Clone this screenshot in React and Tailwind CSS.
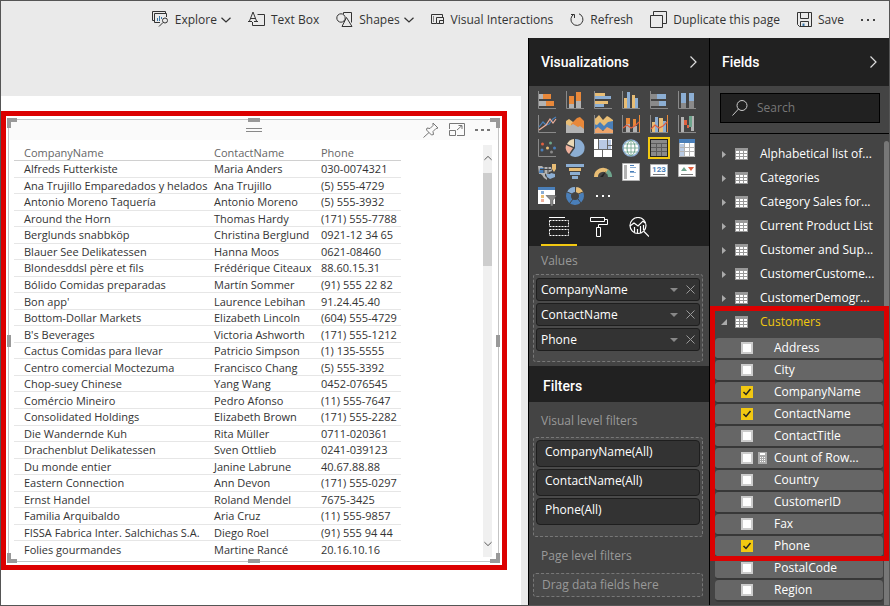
import React from "react";

const customers = [
  ["Alfreds Futterkiste", "Maria Anders", "030-0074321"],
  ["Ana Trujillo Emparedados y helados", "Ana Trujillo", "(5) 555-4729"],
  ["Antonio Moreno Taquería", "Antonio Moreno", "(5) 555-3932"],
  ["Around the Horn", "Thomas Hardy", "(171) 555-7788"],
  ["Berglunds snabbköp", "Christina Berglund", "0921-12 34 65"],
  ["Blauer See Delikatessen", "Hanna Moos", "0621-08460"],
  ["Blondesddsl père et fils", "Frédérique Citeaux", "88.60.15.31"],
  ["Bólido Comidas preparadas", "Martín Sommer", "(91) 555 22 82"],
  ["Bon app'", "Laurence Lebihan", "91.24.45.40"],
  ["Bottom-Dollar Markets", "Elizabeth Lincoln", "(604) 555-4729"],
  ["B's Beverages", "Victoria Ashworth", "(171) 555-1212"],
  ["Cactus Comidas para llevar", "Patricio Simpson", "(1) 135-5555"],
  ["Centro comercial Moctezuma", "Francisco Chang", "(5) 555-3392"],
  ["Chop-suey Chinese", "Yang Wang", "0452-076545"],
  ["Comércio Mineiro", "Pedro Afonso", "(11) 555-7647"],
  ["Consolidated Holdings", "Elizabeth Brown", "(171) 555-2282"],
  ["Die Wandernde Kuh", "Rita Müller", "0711-020361"],
  ["Drachenblut Delikatessen", "Sven Ottlieb", "0241-039123"],
  ["Du monde entier", "Janine Labrune", "40.67.88.88"],
  ["Eastern Connection", "Ann Devon", "(171) 555-0297"],
  ["Ernst Handel", "Roland Mendel", "7675-3425"],
  ["Familia Arquibaldo", "Aria Cruz", "(11) 555-9857"],
  ["FISSA Fabrica Inter. Salchichas S.A.", "Diego Roel", "(91) 555 94 44"],
  ["Folies gourmandes", "Martine Rancé", "20.16.10.16"],
];

const tables = [
  "Alphabetical list of...",
  "Categories",
  "Category Sales for...",
  "Current Product List",
  "Customer and Sup...",
  "CustomerCustome...",
  "CustomerDemogr...",
];

const selectedFields = [
  { name: "Address" },
  { name: "City" },
  { name: "CompanyName", checked: true },
  { name: "ContactName", checked: true },
  { name: "ContactTitle" },
  { name: "Count of Row...", measure: true },
  { name: "Country" },
  { name: "CustomerID" },
  { name: "Fax" },
  { name: "Phone", checked: true },
];

const moreFields = [{ name: "PostalCode" }, { name: "Region" }];

const O = "#e8883a";
const G = "#b3b3b3";
const B = "#8caed3";
const Y = "#e8bd75";
const R = "#e0603f";
const DB = "#4a7fb9";
const PK = "#eeb09c";
const GR = "#6fa58d";

const Axes = () => <path d="M.5 0v17.5H18" fill="none" stroke="#8a8a8a" />;

/* Each entry: [label, drawing] on an 18 x 18 grid. */
const visuals = [
  ["Stacked bar chart", <><path fill={G} d="M1 3h4v5H1zM1 10h7v5H1z" /><path fill={O} d="M5 3h8v5H5zM8 10h8v5H8z" /><Axes /></>],
  ["Stacked column chart", <><path fill={G} d="M3 13h5v4H3zM10 10h5v7h-5z" /><path fill={O} d="M3 5h5v8H3zM10 1h5v9h-5z" /><Axes /></>],
  ["Clustered bar chart", <><path fill={Y} d="M1 2h10v3H1zM1 10h13v3H1z" /><path fill={B} d="M1 5h16v3H1zM1 13h9v3H1z" /><Axes /></>],
  ["Clustered column chart", <><path fill={Y} d="M2 7h3v10H2zM10 4h3v13h-3z" /><path fill={B} d="M5 1h3v16H5zM13 7h3v10h-3z" /><Axes /></>],
  ["100% stacked bar chart", <><path fill="#8a8a8a" d="M1 3h6v5H1zM1 10h8v5H1z" /><path fill={B} d="M7 3h9v5H7zM9 10h7v5H9z" /><Axes /></>],
  ["100% stacked column chart", <><path fill="#8a8a8a" d="M3 12h5v5H3zM11 10h5v7h-5z" /><path fill={B} d="M3 2h5v10H3zM11 2h5v8h-5z" /><Axes /></>],
  ["Line chart", <><Axes /><g fill="none" strokeWidth="1.2"><path stroke={DB} d="M1 12 5 7l3 3 3-1 4-5 3-2" /><path stroke={PK} d="M1 15 8 10l4-6 3 4 3-4" /></g></>],
  ["Area chart", <><path fill={Y} d="M0 6l3-2 4 3 1 6H0z" /><path fill={O} d="M5 9l6-6 3-1 4 4v12H5z" /><path fill={G} d="M0 9l4 2 3-2 5 3 2-1 4 3v4H0z" /></>],
  ["Stacked area chart", <><path fill={Y} d="M0 4l2-1 3-3 4 5 4-4 2 1 4 3v7H0z" /><path fill={DB} d="M0 9l3 1 3-3 4 4 4-4 5-1v9H0z" /><path fill="#eea56b" d="M0 15l4-3 5 4 4-4 6 3v4H0z" /><path stroke="#8a8a8a" fill="none" d="M.5 0v18.500H19" /></>],
  ["Line and stacked column chart", <><path fill={G} d="M4 9h4v8H4zM11 11h4v6h-4z" /><path fill={O} d="M4 3h4v6H4zM11 4h3v7h-3z" /><Axes /><path d="M17.500 0v17" stroke={O} /><path fill="none" stroke={R} strokeWidth="1.2" d="m1 13 4-3 4 3 4-2 4-4" /></>],
  ["Line and clustered column chart", <><path fill={Y} d="M2 7h3v10H2zM9 3h4v14H9z" /><path fill={B} d="M5 2h3v15H5zM13 6h3v11h-3z" /><Axes /><path d="M17.500 0v17" stroke={O} /><path fill="none" stroke={R} strokeWidth="1.2" d="m1 14 4-4 4 3 4-2 4-4" /></>],
  ["Waterfall chart", <><path fill={G} d="M3 2h3v15H3zM13 1h3v15h-3z" /><path fill={R} d="M6 5h3v5H6zM9 10h2v3H9z" /><path fill={GR} d="M11 1h3v11h-3z" /><Axes /></>],
  ["Scatter chart", <><Axes /><circle cx="4.500" cy="5" r="1.500" fill={R} /><circle cx="12.500" cy="4" r="1.500" fill={GR} /><circle cx="9.500" cy="9" r="1.500" fill={Y} /><circle cx="16.500" cy="9" r="1.500" fill={DB} /><circle cx="4" cy="11" r="1.500" fill={DB} /><circle cx="13.500" cy="13" r="1.500" fill="#8a8a8a" /></>],
  ["Pie chart", <><path fill={B} d="M9 9V0a9 9 0 1 1-5 16z" /><path fill="#ead8b5" d="M8 8V0A9 9 0 0 0 1 5z" /><path fill={PK} d="M7 9 0 6a9 9 0 0 0 3 9z" /></>],
  ["Treemap", <><path fill="#fff" d="M0 0h18v18H0z" /><path fill="#b9c9e4" d="M5 1h8v9H5zM14 1h3v5h-3zM14 7h3v3h-3z" /><path stroke="#666" fill="none" d="M4.500 0v10M13.500 0v10M0 10.500h18M8.500 11v7M14 6.500h4" /></>],
  ["Map", <><circle cx="9" cy="9" r="8" fill="#fff" stroke={B} strokeWidth="1.500" /><g fill="none" stroke={GR}><ellipse cx="9" cy="9" rx="4" ry="7.500" /><path d="M1 9h16M2.500 5h13M2.500 13h13M9 1v16" strokeWidth=".8" /></g></>],
  ["Table", <><path fill="#8a8a8a" d="M1 1h16v16H1z" /><path stroke="#5c5c5c" d="M1 4.500h16M1 8.500h16M1 12.500h16M6.500 4v13M11.500 4v13" /></>],
  ["Matrix", <><path fill="#fff" d="M1 0h16v18H1z" /><path fill={DB} d="M1 0h16v4H1z" /><path fill="#b9cbe4" d="M2 5h4v12H2z" /><path stroke={G} fill="none" d="M1.500 4v13.500h15V4M1 8.500h16M1 12.500h16M6.500 4v13M11.500 4v13" /></>],
  ["Filled map", <><path fill={G} d="M0 3h4l1 1h8l1 4-3 1-1 3-4-2-5 1z" /><path fill={DB} d="M2 5h4v5H1z" /><path fill={Y} d="M14 1h4v5l-2 3-2-3z" /><path fill={B} d="M8 11h4l1-1 4 1v3l-5 2-3-2z" /><path fill={G} d="M1 10h6v3l2 2v2l-3-2-2-3z" /><path stroke="#444" fill="none" d="M6 4v6M10 4v7M2 6.500h11" /></>],
  ["Funnel", <><path fill={B} d="M0 1h18v3H0zM4 9h10v3H4zM6 13h6v3H6z" /><path fill={Y} d="M3 5h12v3H3z" /></>],
  ["Gauge", <><path d="M2 14a7 7 0 0 1 12-5" fill="none" stroke={Y} strokeWidth="4" /><path d="M13 8a7 7 0 0 1 3 6" fill="none" stroke={GR} strokeWidth="4" /><path d="m6 14 6-6-3 6z" fill="#222" /></>],
  ["Multi-row card", <><path fill="#fff" stroke={G} d="M.5.5h17v17H.5z" /><path fill={G} d="M2 2h3v14H2z" /><path fill={DB} d="M8 2h4v1H8zM8 8h4v1H8z" /><path fill={B} d="M8 4h6v1H8zM8 9h6v1H8zM8 13h4v1H8z" /></>],
  ["Card", <><path fill="#fff" stroke={G} d="M.5 1.500h17v12H.5z" /><text x="9" y="9" textAnchor="middle" fontSize="8" fontWeight="700" fill={DB} fontFamily="Roboto, sans-serif">123</text><path stroke="#777" d="M3 11.500h12" /></>],
  ["KPI", <><path fill="#fff" stroke={G} d="M.5 1.500h17v12H.5z" /><path fill={GR} d="m3 8 3-4 3 4z" /><path fill={R} d="M10 4h6l-3 4z" /><path stroke="#777" d="M3 11.500h12" /></>],
  ["Slicer", <><path fill="#fff" d="M0 0h17v17H0z" /><path fill={DB} d="M0 0h17v3H0z" /><path fill={B} d="M3 4h3v3H3z" /><path fill={Y} d="M3 8h3v3H3z" /><path fill={PK} d="M3 12h3v3H3z" /><path fill="#8a8a8a" stroke="#444" strokeWidth=".5" d="M8 8.500h11l-4 4.500v6h-2.500v-6z" /></>],
  ["Donut chart", <g fill="none" strokeWidth="5"><circle cx="9" cy="9" r="6.500" stroke={DB} /><path stroke={B} d="M3.400 5.700A6.500 6.500 0 0 1 9 2.500" /><path stroke={Y} d="M10 2.600a6.500 6.500 0 0 1 5 3.700" /><path stroke="#444" strokeWidth="1" d="M9.500 0v6M1 5l5 2M12 7l5-2M12 12l3 4M7 12l-3 4" /></g>],
];

function Chevron({ className }) {
  return (
    <svg className={className} viewBox="0 0 10 6" fill="none" stroke="currentColor" strokeWidth="1.2">
      <path d="m.5.7 4.500 4.300L9.500.7" />
    </svg>
  );
}

function ToolButton({ label, menu, children }) {
  return (
    <button type="button" className="flex items-center gap-1.5 whitespace-nowrap">
      {children}
      <span>{label}</span>
      {menu && <Chevron className="-ml-0.5 h-1.5 w-2.5" />}
    </button>
  );
}

const toolIcon = "h-[17px] w-[17px] shrink-0";

function Toolbar() {
  return (
    <header className="flex h-[37px] items-center justify-end gap-[17px] bg-[#eaeaea] pr-[14px] text-[12px] text-[#333]">
      <ToolButton label="Explore" menu>
        <svg className={toolIcon} viewBox="0 0 17 17" fill="none" stroke="#333">
          <path d="M2.500 9.500h-2v-9h13v2" />
          <path d="M8 11.500H2.500v-9h12V6" />
          <path d="M5.500 10V7M7.500 10V5M9.500 8V6" stroke="#3c78a8" />
          <circle cx="13" cy="9.500" r="2.500" />
          <path d="m11 11.500-4 4" />
        </svg>
      </ToolButton>
      <ToolButton label="Text Box">
        <svg className={toolIcon} viewBox="0 0 17 17" fill="none" stroke="#333">
          <path d="M9.500 3.500h7v11h-12V11" />
          <path d="M0 10.500h4M6 10.500h4M1.500 10 5 1l3.500 9M3 7.500h4.500" />
        </svg>
      </ToolButton>
      <ToolButton label="Shapes" menu>
        <svg className={toolIcon} viewBox="0 0 17 17" fill="none" stroke="#333">
          <path d="M7.500 3V1.500h8v10" />
          <circle cx="5" cy="7" r="4.200" />
          <path d="m10.500 6.500 5.500 9H6z" />
        </svg>
      </ToolButton>
      <ToolButton label="Visual Interactions">
        <svg className="h-[15px] w-[14px] shrink-0" viewBox="0 0 14 15" fill="none" stroke="#333">
          <path d="M5 11.500H.5v-9h11V5" />
          <path d="M2.500 4v6" stroke="#888" />
          <path d="M5.500 11.500v-6h7v6zM8.500 11V8.500H12" />
        </svg>
      </ToolButton>
      <ToolButton label="Refresh">
        <svg className="h-[15px] w-[14px] shrink-0" viewBox="0 0 14 15" fill="none" stroke="#333">
          <path d="M9 1.800a6 6 0 1 1-5 .4" />
          <path d="M1 2.500h3.500V6" />
        </svg>
      </ToolButton>
      <ToolButton label="Duplicate this page">
        <svg className={toolIcon} viewBox="0 0 17 17" fill="none" stroke="#333">
          <path d="M3.500 4V.5h13v12H13" />
          <path d="M.5 4.500h12v12H.5z" />
        </svg>
      </ToolButton>
      <ToolButton label="Save">
        <svg className="h-[15px] w-[15px] shrink-0" viewBox="0 0 15 15" fill="none" stroke="#333">
          <path d="M.5.5h14v14h-12l-2-2z" />
          <path d="M3.500 1v5.500h8V1M3.500 14V9.500h8V14" />
          <path d="M6.500 14v-2.500" stroke="#3c78a8" strokeWidth="2" />
        </svg>
      </ToolButton>
      <button type="button" aria-label="More options" className="flex gap-1 py-2">
        <i className="size-0.5 bg-[#444]" />
        <i className="size-0.5 bg-[#444]" />
        <i className="size-0.5 bg-[#444]" />
      </button>
    </header>
  );
}

function Handles() {
  const base = "absolute border-[#999]";
  return (
    <>
      <i className={`${base} -left-0.5 -top-0.5 size-2.5 border-l-4 border-t-4`} />
      <i className={`${base} -right-0.5 -top-0.5 size-2.5 border-r-4 border-t-4`} />
      <i className={`${base} -bottom-0.5 -left-0.5 size-2.5 border-b-4 border-l-4`} />
      <i className={`${base} -bottom-0.5 -right-0.5 size-2.5 border-b-4 border-r-4`} />
      <i className="absolute -top-0.5 left-1/2 h-1 w-3 -translate-x-1/2 bg-[#999]" />
      <i className="absolute -bottom-0.5 left-1/2 h-1 w-3 -translate-x-1/2 bg-[#999]" />
      <i className="absolute -left-0.5 top-1/2 h-3 w-1 -translate-y-1/2 bg-[#999]" />
      <i className="absolute -right-0.5 top-1/2 h-3 w-1 -translate-y-1/2 bg-[#999]" />
    </>
  );
}

function TableVisual() {
  return (
    <section className="mr-[14px] border-[5px] border-[#dc0000] bg-white p-[3px] pl-0.5">
      <div className="relative border border-[#c4c4c4] bg-white">
        <Handles />
        <div className="grid h-5 grid-cols-3 items-center bg-[#fafafa]">
          <span />
          <i className="h-1 w-4 justify-self-center border-y border-[#888]" />
          <div className="flex items-center justify-end gap-2.5 pr-2 text-[#777]">
            <button type="button" aria-label="Pin visual">
              <svg className="size-4" viewBox="0 0 16 16" fill="none" stroke="currentColor">
                <path d="m10 1 5 5-2 .5-3 3 .5 3-2 .5-5-5 .5-2 3 .5 3-3zM6 10.500.5 15.500" />
              </svg>
            </button>
            <button type="button" aria-label="Focus mode">
              <svg className="h-3.5 w-4" viewBox="0 0 16 14" fill="none" stroke="currentColor">
                <path d="M.5 6V.5h15v12H8M.5 7.500h6v5h-6zM8 7l5-4.500M9.500 2.500H13V6" />
              </svg>
            </button>
            <button type="button" aria-label="More options" className="flex gap-[3px]">
              <i className="h-0.5 w-[3px] bg-[#777]" />
              <i className="h-0.5 w-[3px] bg-[#777]" />
              <i className="h-0.5 w-[3px] bg-[#777]" />
            </button>
          </div>
        </div>
        <div className="flex justify-between pb-1 pl-[5px] pr-1.5 pt-[5px]">
          <table className="h-[412px] w-[387px] table-fixed border-collapse text-left text-[11px] leading-[15px] text-[#333]">
            <colgroup>
              <col className="w-[190px]" />
              <col className="w-[107px]" />
              <col />
            </colgroup>
            <thead>
              <tr className="border-b border-[#d0d0d0] text-[#666]">
                {["CompanyName", "ContactName", "Phone"].map((h) => (
                  <th key={h} className="whitespace-nowrap p-0 pl-[10px] font-normal">{h}</th>
                ))}
              </tr>
            </thead>
            <tbody>
              {customers.map((row) => (
                <tr key={row[0]} className="border-b border-[#e6e6e6] last:border-0">
                  {row.map((cell) => (
                    <td key={cell} className="whitespace-nowrap p-0 pl-[10px]">{cell}</td>
                  ))}
                </tr>
              ))}
            </tbody>
          </table>
          <div className="flex w-[9px] flex-col items-center bg-[#f0f0f0] py-2.5 text-[#555]">
            <Chevron className="h-1.5 w-2 rotate-180" />
            <i className="mt-3 h-[93px] w-full bg-[#cdcdcd]" />
            <Chevron className="mt-auto h-1.5 w-2" />
          </div>
        </div>
      </div>
    </section>
  );
}

function PanelHeader({ title }) {
  return (
    <div className="flex h-12 items-center justify-between bg-[#212121] pl-3 pr-3 font-['Roboto',sans-serif] text-[14px] font-medium text-white">
      <h2>{title}</h2>
      <button type="button" aria-label={`Collapse ${title}`}>
        <svg className="h-3 w-[7px]" viewBox="0 0 7 12" fill="none" stroke="#ddd" strokeWidth="1.200">
          <path d="m.5.5 5.500 5.500-5.500 5.500" />
        </svg>
      </button>
    </div>
  );
}

function Well({ name }) {
  return (
    <div className="flex h-[23px] items-center rounded-[3px] border border-[#1e1e1e] bg-[#333] pl-1 pr-1 text-white">
      <span className="flex-1">{name}</span>
      <button type="button" aria-label={`${name} options`} className="mr-2">
        <svg className="h-1 w-2" viewBox="0 0 8 4"><path d="M0 0h8L4 4z" fill="#888" /></svg>
      </button>
      <button type="button" aria-label={`Remove ${name}`}>
        <svg className="size-[9px]" viewBox="0 0 9 9" stroke="#999"><path d="m.5.5 8 8M8.500.5l-8 8" /></svg>
      </button>
    </div>
  );
}

function Visualizations() {
  return (
    <aside className="flex w-[182px] shrink-0 flex-col border-x border-black bg-[#444] text-[12px] leading-4">
      <PanelHeader title="Visualizations" />
      <div className="grid grid-cols-[repeat(6,28px)] auto-rows-[24px] pb-0.5 pl-1 pt-0.5">
        {visuals.map(([label, art]) => (
          <button
            key={label}
            type="button"
            title={label}
            className={
              label === "Table"
                ? "grid size-[22px] place-items-center place-self-center border-2 border-[#f2c811] bg-[#222]"
                : "grid place-items-center"
            }
          >
            <svg className="size-[18px] overflow-visible" viewBox="0 0 18 18">{art}</svg>
          </button>
        ))}
        <button type="button" aria-label="More visuals" className="flex items-center justify-center gap-1">
          <i className="size-0.5 bg-white" />
          <i className="size-0.5 bg-white" />
          <i className="size-0.5 bg-white" />
        </button>
      </div>
      <nav className="flex h-9 gap-1 bg-[#212121] pl-3">
        <button type="button" aria-label="Fields" className="grid w-9 place-items-center border-b-2 border-[#f2c811]">
          <svg className="h-5 w-[21px]" viewBox="0 0 21 20" fill="none" stroke="#fff">
            <path d="M0 .5h16" />
            <path d="M.5 3.500h19v6H.5zM.5 12.500h19v6H.5z" strokeDasharray="2 1" />
          </svg>
        </button>
        <button type="button" aria-label="Format" className="grid w-9 place-items-center border-b-2 border-transparent">
          <svg className="h-5 w-[18px]" viewBox="0 0 18 20" fill="none" stroke="#fff">
            <path d="M.5.5h14v4H.5zM15 2.500h2.500v5h-9V10M6.500 10.500h4v9h-4z" />
          </svg>
        </button>
        <button type="button" aria-label="Analytics" className="grid w-9 place-items-center border-b-2 border-transparent">
          <svg className="size-5" viewBox="0 0 20 20" fill="none" stroke="#fff" strokeWidth="1.200">
            <circle cx="9" cy="8.500" r="8" />
            <path d="m1 9 4-3 4 3 5-5 2 2M5.500 15v-5M8.500 16v-4M11.500 16V9M14.500 13V8M15 14.500l5 5" />
          </svg>
        </button>
      </nav>
      <div className="pb-1 pl-1 pr-1.5 pt-[7px]">
        <h3 className="pl-2 text-[#999]">Values</h3>
        <div className="mt-[5px] flex flex-col gap-0.5 rounded-[3px] border border-dashed border-[#777] bg-[#4a4a4a] px-0.5 pb-[10px] pt-[3px]">
          <Well name="CompanyName" />
          <Well name="ContactName" />
          <Well name="Phone" />
        </div>
      </div>
      <h2 className="flex h-9 items-center bg-[#212121] pl-[14px] pt-1 font-['Roboto',sans-serif] text-[14px] font-medium text-white">
        Filters
      </h2>
      <div className="pl-1 pr-1.5 pt-[11px]">
        <h3 className="pl-2 text-[#999]">Visual level filters</h3>
        <div className="mt-2 flex flex-col gap-0.5 rounded-[3px] border border-dashed border-[#777] bg-[#4a4a4a] px-0.5 pb-[11px] pt-0.5">
          {["CompanyName(All)", "ContactName(All)", "Phone(All)"].map((f) => (
            <button
              key={f}
              type="button"
              className="h-[27px] rounded-[4px] border border-[#1e1e1e] bg-[#333] pb-1 pl-2 text-left text-white"
            >
              {f}
            </button>
          ))}
        </div>
        <h3 className="mt-[11px] pl-2 text-[#999]">Page level filters</h3>
        <div className="mt-[9px] flex h-6 items-center rounded-[3px] border border-dashed border-[#777] bg-[#4a4a4a] pl-2 text-[#999]">
          Drag data fields here
        </div>
      </div>
    </aside>
  );
}

function TableRow({ name, open }) {
  return (
    <button type="button" aria-expanded={!!open} className="flex h-6 w-full items-center pl-[11px] text-left">
      <svg className="mr-2 h-[7px] w-[6px]" viewBox="0 0 6 7">
        <path d={open ? "M6 0v6H0z" : "M1 0l4 3.500L1 7z"} fill="#aaa" />
      </svg>
      <svg className="mr-3 h-3 w-[13px]" viewBox="0 0 13 12">
        <path fill="#999" d="M0 0h13v12H0z" />
        <path fill="#fff" d="M1 3h3v2H1zM5 3h3v2H5zM9 3h3v2H9zM1 6h3v2H1zM5 6h3v2H5zM9 6h3v2H9zM1 9h3v2H1zM5 9h3v2H5zM9 9h3v2H9z" />
      </svg>
      <span className={open ? "whitespace-nowrap text-[#f2c811]" : "whitespace-nowrap text-white"}>{name}</span>
    </button>
  );
}

function FieldRow({ field }) {
  return (
    <label className="ml-[5px] mr-[6px] flex h-[22px] items-center rounded-[4px] border-b-2 border-[#383838] bg-[#666] pl-[26px] text-white">
      <span className="relative grid size-3">
        <input
          type="checkbox"
          defaultChecked={field.checked}
          className="peer size-3 appearance-none border-2 border-[#ccc] bg-white checked:border-[#f2c811] checked:bg-[#f2c811]"
        />
        <svg className="pointer-events-none absolute inset-0 hidden size-3 peer-checked:block" viewBox="0 0 12 12" fill="none" stroke="#222" strokeWidth="1.500">
          <path d="m2.500 6 2.500 2.500 4.500-5.500" />
        </svg>
      </span>
      <span className="flex w-[21px] pl-[5px]">
        {field.measure && (
          <svg className="h-3 w-[9px]" viewBox="0 0 9 12">
            <path fill="#aaa" d="M0 0h9v12H0z" />
            <path fill="#fff" d="M2 1h5v2H2zM2 5h1v1H2zM4 5h1v1H4zM6 5h1v1H6zM2 7h1v1H2zM4 7h1v1H4zM6 7h1v1H6zM2 9h1v1H2zM4 9h1v1H4zM6 9h1v1H6z" />
          </svg>
        )}
      </span>
      <span className="whitespace-nowrap">{field.name}</span>
    </label>
  );
}

function Fields() {
  return (
    <aside className="flex w-[179px] shrink-0 flex-col bg-[#444] text-[12px] leading-4">
      <PanelHeader title="Fields" />
      <div className="border-b border-black pb-[10px] pl-[10px] pr-[9px] pt-[7px]">
        <label className="flex h-[30px] items-center gap-[9px] border border-black bg-[#212121] pl-[11px]">
          <svg className="size-4 shrink-0" viewBox="0 0 16 16" fill="none" stroke="#ccc">
            <circle cx="10" cy="5.500" r="5" />
            <path d="M6.500 9 .5 15.500" />
          </svg>
          <input type="search" placeholder="Search" aria-label="Search" className="w-full min-w-0 bg-transparent text-white outline-none placeholder:text-[#777]" />
        </label>
      </div>
      <div className="relative flex-1 pt-2">
        <i className="absolute bottom-0 right-0 top-[7px] w-[5px] rounded-t-full bg-[#777]" />
        {tables.map((t) => (
          <TableRow key={t} name={t} />
        ))}
        <div className="relative">
          <TableRow name="Customers" open />
          <div className="pt-1">
            {selectedFields.map((f) => (
              <FieldRow key={f.name} field={f} />
            ))}
          </div>
          <div className="pointer-events-none absolute -bottom-[3px] -top-1 left-0 right-0 border-[5px] border-[#dc0000]" />
        </div>
        {moreFields.map((f) => (
          <FieldRow key={f.name} field={f} />
        ))}
      </div>
    </aside>
  );
}

export default function App() {
  return (
    <div className="flex min-h-screen flex-col border border-[#555] font-['Open_Sans','Noto_Sans',sans-serif]">
      <Toolbar />
      <div className="flex flex-1">
        <main className="min-w-0 flex-1 bg-[#eaeaea] pr-[7px] pt-[58px]">
          <div className="h-full bg-white pt-[15px]">
            <TableVisual />
          </div>
        </main>
        <Visualizations />
        <Fields />
      </div>
    </div>
  );
}
